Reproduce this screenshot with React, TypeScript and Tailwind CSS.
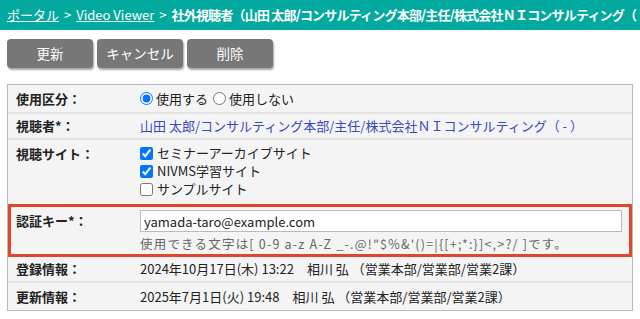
import React from 'react';

const rowCls = 'flex border-b-2 border-[#e3e3e3]';
const labelCls = 'w-[132px] shrink-0 pl-[8px] font-bold text-[#222]';

function Radio({ checked }: { checked?: boolean }) {
    return (
        <input
            type="radio"
            name="use"
            defaultChecked={checked}
            className="m-0 mr-[3px] h-[13px] w-[13px] accent-[#0075ff]"
        />
    );
}

function Check({ checked, label }: { checked?: boolean; label: string }) {
    return (
        <label className="flex h-[18px] items-center">
            <input
                type="checkbox"
                defaultChecked={checked}
                className="m-0 mr-[4px] h-[13px] w-[13px] accent-[#0075ff]"
            />
            <span>{label}</span>
        </label>
    );
}

export default function App() {
    return (
        <div
            className="h-[319px] w-[640px] overflow-hidden bg-white text-[13px] text-[#222]"
            style={{ fontFamily: '"Noto Sans CJK JP", "Noto Sans", sans-serif' }}
        >
            {/* breadcrumb */}
            <div className="flex h-[30px] items-center overflow-hidden whitespace-nowrap bg-[#02a99e] pl-[7px] text-white">
                <span className="underline">ポータル</span>
                <span className="mx-[5px]">&gt;</span>
                <span className="underline">Video Viewer</span>
                <span className="mx-[5px]">&gt;</span>
                <span className="font-bold tracking-[-0.8px]">社外視聴者（山田 太郎/コンサルティング本部/主任/株式会社ＮＩコンサルティング（</span>
            </div>

            {/* buttons */}
            <div className="mt-[9px] flex gap-[4px] pl-[7px]">
                {['更新', 'キャンセル', '削除'].map((b) => (
                    <button
                        key={b}
                        className="h-[29px] w-[86px] rounded-[4px] bg-[#777] text-[13.5px] text-white shadow-[1px_2px_2px_rgba(0,0,0,0.35)]"
                    >
                        {b}
                    </button>
                ))}
            </div>

            {/* form */}
            <div className="mx-[7px] mt-[16px] border border-[#b8b8b8] bg-[#f4f4f4]">
                <div className={`${rowCls} h-[29px] items-center`}>
                    <div className={labelCls}>使用区分：</div>
                    <div className="flex items-center">
                        <Radio checked />
                        <span className="mr-[5px]">使用する</span>
                        <Radio />
                        <span>使用しない</span>
                    </div>
                </div>

                <div className={`${rowCls} h-[26px] items-center`}>
                    <div className={labelCls}>視聴者*：</div>
                    <div className="text-[#3a48c2]">
                        山田 太郎/コンサルティング本部/主任/株式会社ＮＩコンサルティング（ - ）
                    </div>
                </div>

                <div className={`flex h-[64px] pt-[4px]`}>
                    <div className={labelCls}>視聴サイト：</div>
                    <div className="flex flex-col">
                        <Check checked label="セミナーアーカイブサイト" />
                        <Check checked label="NIVMS学習サイト" />
                        <Check label="サンプルサイト" />
                    </div>
                </div>

                <div className="flex h-[53px] border-[3px] border-[#e3442e] pt-[3px]">
                    <div className="w-[129px] shrink-0 pl-[5px] pt-[1px] font-bold">認証キー*：</div>
                    <div className="flex flex-col">
                        <input
                            defaultValue="yamada-taro@example.com"
                            className="h-[23px] w-[482px] border border-[#bbb] bg-white px-[3px] text-[13px] outline-none"
                        />
                        <div className="mt-[3px] whitespace-pre text-[12.5px] tracking-[1.2px] text-[#666]">
                            使用できる文字は[ 0-9 a-z A-Z _-.@!"$%&amp;'()=|{'{'}[+;*:{'}'}]&lt;,&gt;?/ ]です。
                        </div>
                    </div>
                </div>

                <div className={`${rowCls} h-[26px] items-center`}>
                    <div className={labelCls}>登録情報：</div>
                    <div className="whitespace-pre">2024年10月17日(木) 13:22　相川 弘 （営業本部/営業部/営業2課）</div>
                </div>

                <div className="flex h-[27px] items-center">
                    <div className={labelCls}>更新情報：</div>
                    <div className="whitespace-pre">2025年7月1日(火) 19:48　相川 弘 （営業本部/営業部/営業2課）</div>
                </div>
            </div>
        </div>
    );
}
